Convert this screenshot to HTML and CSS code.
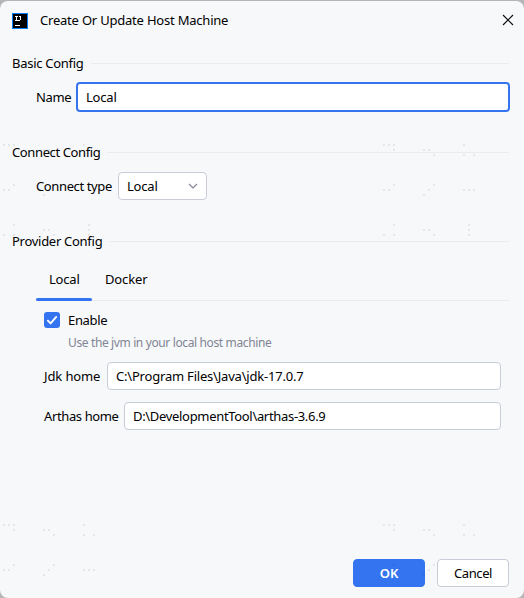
FILE: index.html
```html
<!DOCTYPE html>
<html lang="en">
<head>
<meta charset="utf-8">
<title>Create Or Update Host Machine</title>
<link rel="stylesheet" href="styles.css">
</head>
<body>
<main class="dialog">
  <header class="titlebar">
    <svg class="logo" width="16" height="16" viewBox="0 0 16 16" shape-rendering="crispEdges">
      <rect width="16" height="16" fill="#087cfa"/>
      <rect x="1" y="1" width="14" height="14" fill="#000"/>
      <path d="M3 3h3v1H5v3h1v1H3V7h1V4H3zM7 3h2v4H8v1H6V7h2V4H7zM3 12h5v1H3z" fill="#fff"/>
    </svg>
    <h1 class="title"><span class="t-title">Create Or Update Host Machine</span></h1>
    <svg class="close" width="12" height="12" viewBox="0 0 12 12"><path d="M1 1l10 10M11 1L1 11" stroke="#111" stroke-width="1.15"/></svg>
  </header>
  <section class="group basic">
    <h2 class="heading"><span class="t-basic">Basic Config</span></h2>
    <div class="row"><label class="label-name"><span class="t-name">Name</span></label><div class="field focused"><span class="t-local">Local</span></div></div>
  </section>
  <section class="group connect">
    <h2 class="heading"><span class="t-connect">Connect Config</span></h2>
    <div class="row"><label class="label-type"><span class="t-type">Connect type</span></label>
      <div class="field combo"><span class="t-local">Local</span><svg width="10" height="6" viewBox="0 0 10 6"><path d="M1 1l4 4 4-4" fill="none" stroke="#818594" stroke-width="1.1"/></svg></div></div>
  </section>
  <section class="group provider">
    <h2 class="heading"><span class="t-provider">Provider Config</span></h2>
    <nav class="tabs"><div class="tab active"><span class="t-local">Local</span></div><div class="tab"><span class="t-docker">Docker</span></div></nav>
    <div class="panel">
      <div class="check"><svg width="16" height="16" viewBox="0 0 16 16"><rect width="16" height="16" rx="3" fill="#3574f0"/><path d="M3.9 8.7l2.7 2.7 5.6-6.5" fill="none" stroke="#fff" stroke-width="1.9" stroke-linecap="round" stroke-linejoin="round"/></svg><span class="t-enable">Enable</span></div>
      <p class="hint"><span class="t-hint">Use the jvm in your local host machine</span></p>
      <div class="row"><label class="label-jdk"><span class="t-jdk">Jdk home</span></label><div class="field"><span class="t-jdkpath">C:\Program Files\Java\jdk-17.0.7</span></div></div>
      <div class="row"><label class="label-arthas"><span class="t-arthas">Arthas home</span></label><div class="field"><span class="t-arthaspath">D:\DevelopmentTool\arthas-3.6.9</span></div></div>
    </div>
  </section>
  <footer class="actions"><button class="btn primary"><span class="t-ok">OK</span></button><button class="btn"><span class="t-cancel">Cancel</span></button></footer>
</main>
<svg class="dots" width="524" height="598" shape-rendering="crispEdges">
  <defs>
    <path id="mark" d="M3 144h2v2h-2zM8 144h2v2h-2zM13 144h2v2h-2zM13 149h2v2h-2zM43 149h2v2h-2zM48 149h2v2h-2zM53 154h2v2h-2zM83 144h2v2h-2zM83 154h2v2h-2zM93 154h2v2h-2zM13 184h2v2h-2zM3 189h2v2h-2zM8 189h2v2h-2zM53 184h2v2h-2zM48 189h2v2h-2zM43 194h2v2h-2zM83 189h2v2h-2zM88 189h2v2h-2zM93 189h2v2h-2zM13 224h2v2h-2zM3 234h2v2h-2zM13 234h2v2h-2zM43 229h2v2h-2zM48 229h2v2h-2zM53 234h2v2h-2zM88 224h2v2h-2zM88 229h2v2h-2zM88 234h2v2h-2z"/>
  </defs>
  <g fill="#000" fill-opacity=".07"><use href="#mark"/><use href="#mark" x="380"/><use href="#mark" y="380"/><use href="#mark" x="380" y="380"/></g>
</svg>
</body>
</html>
```
FILE: styles.css
```css
* { box-sizing: border-box; }
body {
  margin: 0;
  background: #b4b5b7;
  color: #000;
  font: 13px/18px "Noto Sans", "Open Sans", sans-serif;
}
h1, h2, p { margin: 0; font: inherit; }
.dialog {
  display: flex;
  flex-direction: column;
  width: 524px;
  height: 598px;
  border-top: 1px solid #b4b5b7;
  border-radius: 8px;
  background: #f7f8fa;
  overflow: hidden;
}
.titlebar { display: flex; align-items: center; height: 39px; padding: 0 10px 0 12px; }
.title { flex: 1; margin: -2px 0 0 12px; }
.close { margin-top: -1px; }
.group { padding: 0 15px 0 12px; }
.heading { display: flex; align-items: center; height: 18px; white-space: nowrap; gap: 7px; }
.heading::after { content: ""; flex: 1; height: 1px; background: #ebecf0; margin-top: 1px; }
.basic { padding-top: 14px; }
.connect { padding-top: 31px; }
.provider { padding-top: 32px; }
.row { display: flex; align-items: center; white-space: nowrap; }
.field {
  display: flex;
  align-items: center;
  flex: 1;
  height: 28px;
  padding: 0 8px;
  border: 1px solid #c9ccd6;
  border-radius: 4px;
  background: #fff;
}
.basic .row { margin: 10px -1px 0 24px; }
.label-name { width: 40px; }
.focused { height: 30px; border: 2px solid #3574f0; }
.connect .row { margin: 11px 0 0 24px; }
.label-type { width: 82px; }
.combo { flex: none; width: 89px; justify-content: space-between; }
.tabs { display: flex; height: 42px; margin: 9px 0 0 24px; border-bottom: 1px solid #ebecf0; }
.tab { display: flex; flex-direction: column; justify-content: center; width: 56px; height: 42px; padding: 0 13px 2px; white-space: nowrap; }
.active { padding-bottom: 0; }
.active::before { content: ""; height: 1px; margin-top: auto; }
.active::after { content: ""; height: 3px; margin: auto -13px 0; border-radius: 2px; background: #3574f0; }
.panel { padding: 11px 8px 0 32px; }
.check { display: flex; align-items: center; gap: 8px; height: 16px; }
.hint { margin: 6px 0 0 24px; color: #818594; font-size: 12px; white-space: nowrap; }
.panel .row { margin-top: 12px; }
.panel .hint + .row { margin-top: 10px; }
.label-jdk { width: 63px; }
.label-arthas { width: 80px; }
.actions { display: flex; justify-content: flex-end; gap: 12px; margin-top: auto; padding: 0 15px 11px; }
.btn { width: 72px; height: 28px; padding: 0; border: 1px solid #c9ccd6; border-radius: 4px; background: #fff; color: #000; font: inherit; }
.primary { border-color: #3574f0; background: #3574f0; color: #fff; font-weight: 600; }
.t-title { letter-spacing: -.21px; }
.t-basic, .t-provider { letter-spacing: -.28px; }
.t-connect, .t-type, .t-arthas { letter-spacing: -.38px; }
.t-name, .t-enable { letter-spacing: -.35px; }
.t-local, .t-jdkpath { letter-spacing: -.2px; }
.t-docker, .t-jdk { letter-spacing: -.12px; }
.t-hint { letter-spacing: -.37px; }
.t-arthaspath { letter-spacing: -.32px; }
.t-cancel { letter-spacing: -.4px; }
.dots { position: absolute; left: 0; top: 0; pointer-events: none; }
```
